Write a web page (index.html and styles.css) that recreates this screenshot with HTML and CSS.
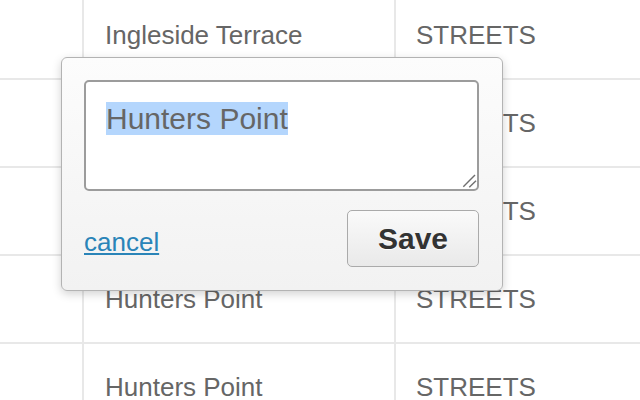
FILE: index.html
```html
<!DOCTYPE html>
<html>
<head>
<meta charset="utf-8">
<link rel="stylesheet" href="styles.css">
</head>
<body>
<div class="table">
  <div class="row"><div class="cell"></div><div class="cell">Ingleside Terrace</div><div class="cell">STREETS</div></div>
  <div class="row"><div class="cell"></div><div class="cell">Hunters Point</div><div class="cell">STREETS</div></div>
  <div class="row"><div class="cell"></div><div class="cell">Hunters Point</div><div class="cell">STREETS</div></div>
  <div class="row"><div class="cell"></div><div class="cell">Hunters Point</div><div class="cell">STREETS</div></div>
  <div class="row"><div class="cell"></div><div class="cell">Hunters Point</div><div class="cell">STREETS</div></div>
</div>

<div class="popover">
  <div class="field">
    <span class="sel">Hunters Point</span>
    <svg class="grip" width="16" height="16" viewBox="0 0 16 16">
      <line x1="2.3" y1="13.7" x2="14" y2="2" stroke="#6f6f6f" stroke-width="1.4"/>
      <line x1="8.3" y1="14.3" x2="15" y2="7.7" stroke="#6f6f6f" stroke-width="1.4"/>
    </svg>
  </div>
  <div class="actions">
    <a class="cancel" href="#">cancel</a>
    <button class="save">Save</button>
  </div>
</div>
</body>
</html>
```

FILE: styles.css
```css
html, body {
  margin: 0;
  padding: 0;
  background: #fff;
  overflow: hidden;
}
body {
  position: relative;
  width: 640px;
  height: 400px;
  font-family: "Liberation Sans", Helvetica, Arial, sans-serif;
}
.table {
  margin-top: -8px;
}
.row {
  display: grid;
  grid-template-columns: 84px 312px 1fr;
  height: 88px;
  box-sizing: border-box;
  border-bottom: 2px solid #e8e8e8;
}
.cell {
  display: flex;
  align-items: center;
  padding-left: 21px;
  font-size: 26px;
  color: #666;
  box-sizing: border-box;
}
.cell:nth-child(1),
.cell:nth-child(2) {
  border-right: 2px solid #e8e8e8;
}
.cell:nth-child(3) {
  padding-left: 20px;
}
.popover {
  position: absolute;
  left: 61px;
  top: 57px;
  width: 442px;
  height: 234px;
  box-sizing: border-box;
  border: 1px solid #b3b3b3;
  border-radius: 6px;
  background: linear-gradient(#fcfcfc, #f2f2f2);
  box-shadow: 0 3px 10px rgba(0, 0, 0, 0.18);
  padding: 22px 23px 0 22px;
}
.field {
  position: relative;
  height: 111px;
  box-sizing: border-box;
  border: 2px solid #9c9c9c;
  border-radius: 5px;
  background: #fff;
  padding: 20px 19px 20px 20px;
  font-size: 30px;
  line-height: 34px;
  color: #666;
}
.sel {
  background: #b4d6fd;
}
.grip {
  position: absolute;
  right: 0;
  bottom: 0;
}
.actions {
  display: flex;
  justify-content: space-between;
  align-items: flex-end;
  margin-top: 19px;
}
.cancel {
  font-size: 26px;
  line-height: 30px;
  color: #2a84b8;
  text-decoration: underline;
  text-decoration-thickness: 2px;
  text-underline-offset: 2px;
  margin-bottom: 10px;
}
.save {
  width: 132px;
  height: 57px;
  box-sizing: border-box;
  border: 1px solid #aaa;
  border-radius: 5px;
  background: linear-gradient(#fafafa, #e9e9e9);
  font-family: "Liberation Sans", Helvetica, Arial, sans-serif;
  font-weight: bold;
  font-size: 30px;
  color: #333;
  text-shadow: 0 1px 0 #fff;
  padding: 0;
}
```
